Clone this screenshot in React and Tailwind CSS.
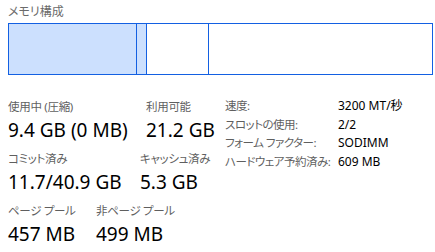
// App.jsx — メモリ構成 panel

const font = { fontFamily: '"Noto Sans", "Noto Sans CJK JP", sans-serif' }

function Stat({ label, value, className = '' }) {
  return (
    <div className={`flex flex-col whitespace-nowrap ${className}`}>
      <span className="text-[11.5px] leading-[20px] tracking-[-0.3px] text-[#5f5f5f]">{label}</span>
      <span className="text-[19px] leading-[26px] text-black">{value}</span>
    </div>
  )
}

const specs = [
  ['速度:', '3200 MT/秒'],
  ['スロットの使用:', '2/2'],
  ['フォーム ファクター:', 'SODIMM'],
  ['ハードウェア予約済み:', '609 MB'],
]

export default function App() {
  return (
    <div
      className="w-[435px] h-[252px] bg-white overflow-hidden pt-1 [font-feature-settings:'palt']"
      style={font}
    >
      {/* ── タイトル ── */}
      <div className="px-2 text-[12px] leading-[16px] text-[#6b6b6b]">メモリ構成</div>

      {/* ── 構成バー ── */}
      <div className="ml-2 mt-[3px] w-[425px] h-[52px] flex border border-[#1360e2]">
        <div className="w-[128px] bg-[#cce0fe] border-r border-[#1360e2]" />
        <div className="w-[10px] bg-[#cce0fe] border-r border-[#1360e2]" />
        <div className="w-[62px] border-r border-[#1360e2]" />
        <div className="flex-1" />
      </div>

      {/* ── 詳細 ── */}
      <div className="flex mt-[22px]">
        <div className="w-[217px] shrink-0 pl-2 flex flex-col gap-[6px]">
          <div className="flex">
            <Stat className="w-[138px] shrink-0" label="使用中 (圧縮)" value="9.4 GB (0 MB)" />
            <Stat label="利用可能" value="21.2 GB" />
          </div>
          <div className="flex">
            <Stat className="w-[132px] shrink-0" label="コミット済み" value="11.7/40.9 GB" />
            <Stat label="キャッシュ済み" value="5.3 GB" />
          </div>
          <div className="flex">
            <Stat className="w-[88px] shrink-0" label="ページ プール" value="457 MB" />
            <Stat label="非ページ プール" value="499 MB" />
          </div>
        </div>

        <div className="pl-2 flex flex-col leading-[18.5px] whitespace-nowrap">
          {specs.map(([k, v]) => (
            <div key={k} className="flex">
              <span className="w-[113px] shrink-0 text-[11.5px] tracking-[-0.5px] text-[#5f5f5f]">{k}</span>
              <span className="text-[12px] text-black">{v}</span>
            </div>
          ))}
        </div>
      </div>
    </div>
  )
}
